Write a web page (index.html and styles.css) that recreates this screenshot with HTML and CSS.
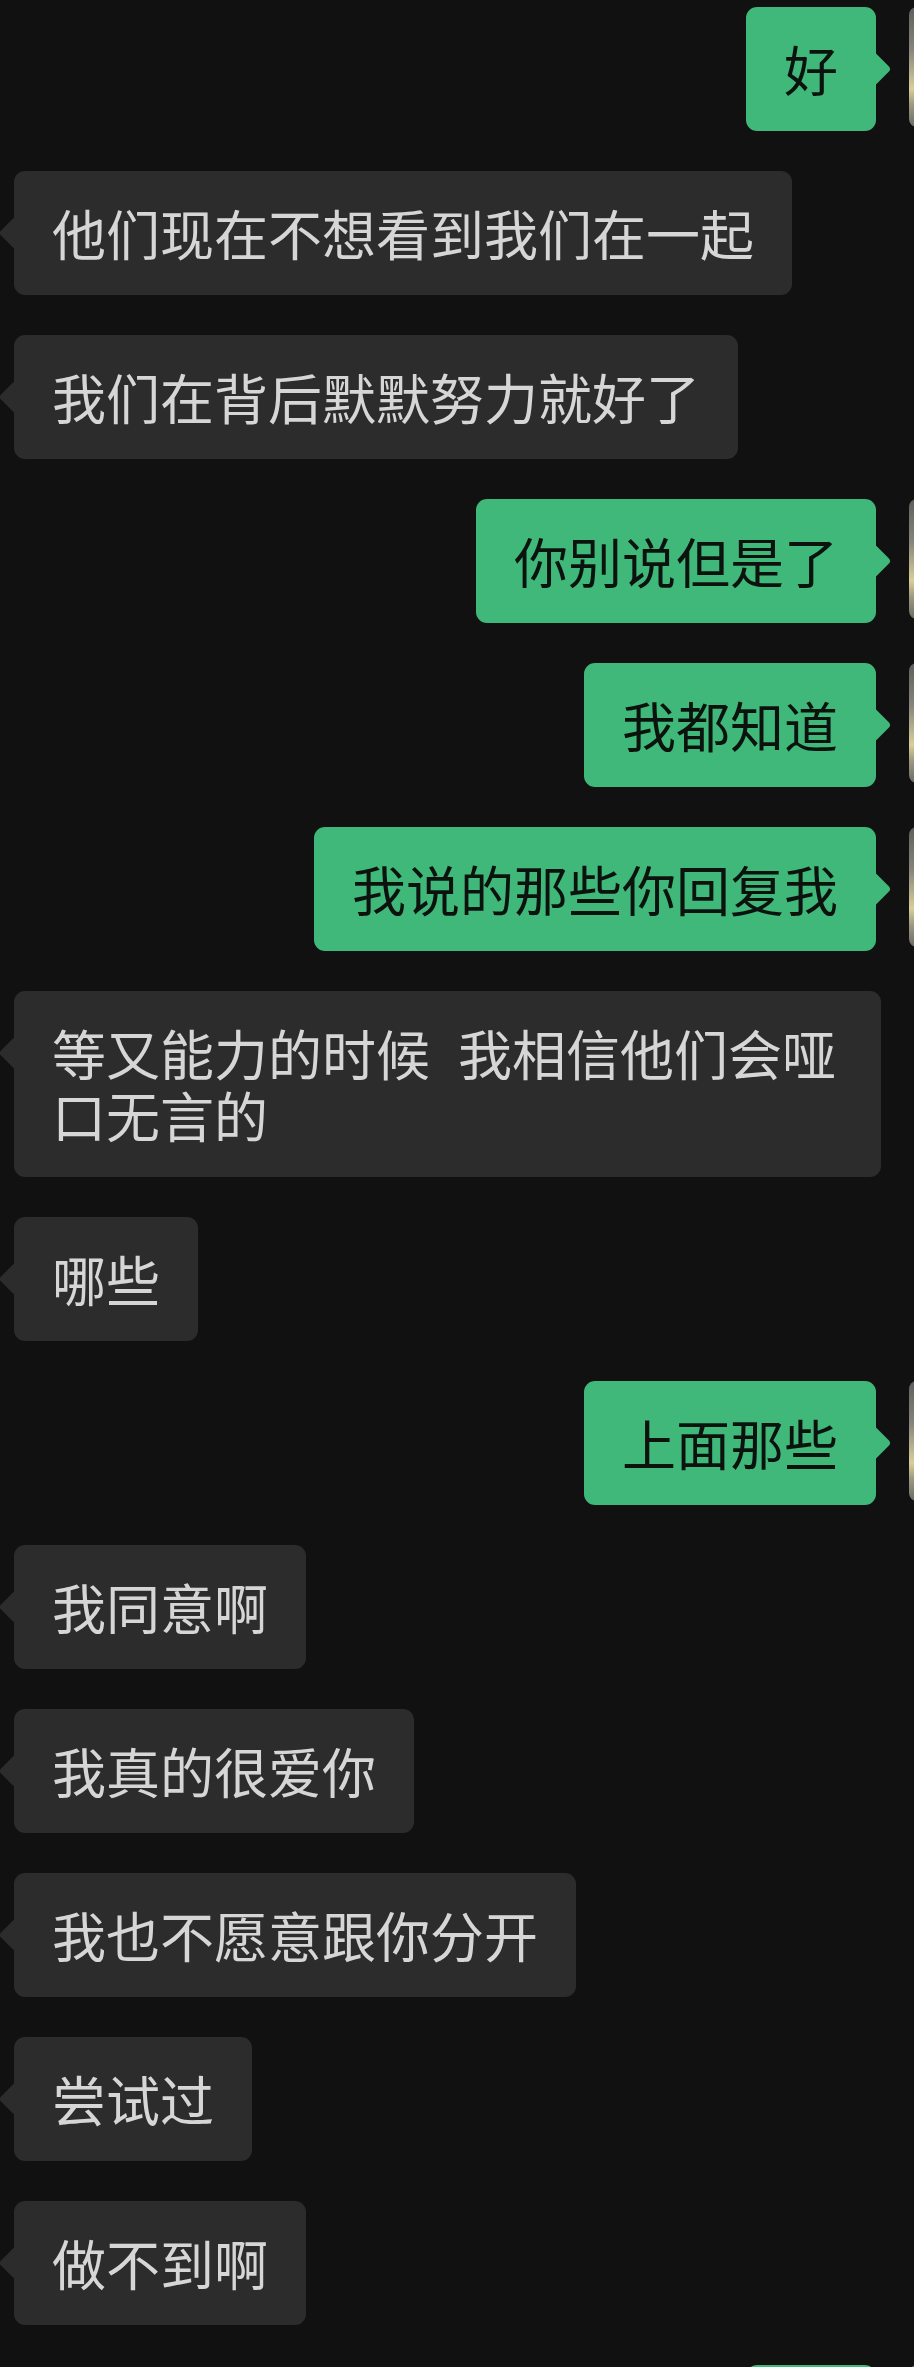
FILE: index.html
```html
<!DOCTYPE html>
<html lang="zh-CN">
<head>
    <meta charset="UTF-8">
    <meta name="viewport" content="width=device-width, initial-scale=1.0">
    <title>聊天记录</title>
    <link rel="stylesheet" href="styles.css">
</head>
<body>
    <div class="chat">
        <div class="msg sent">
            <div class="bubble">好</div>
            <div class="avatar"></div>
        </div>
        <div class="msg received">
            <div class="bubble">他们现在不想看到我们在一起</div>
        </div>
        <div class="msg received">
            <div class="bubble">我们在背后默默努力就好了</div>
        </div>
        <div class="msg sent">
            <div class="bubble">你别说但是了</div>
            <div class="avatar"></div>
        </div>
        <div class="msg sent">
            <div class="bubble">我都知道</div>
            <div class="avatar"></div>
        </div>
        <div class="msg sent">
            <div class="bubble">我说的那些你回复我</div>
            <div class="avatar"></div>
        </div>
        <div class="msg received">
            <div class="bubble">等又能力的时候 我相信他们会哑口无言的</div>
        </div>
        <div class="msg received">
            <div class="bubble">哪些</div>
        </div>
        <div class="msg sent">
            <div class="bubble">上面那些</div>
            <div class="avatar"></div>
        </div>
        <div class="msg received">
            <div class="bubble">我同意啊</div>
        </div>
        <div class="msg received">
            <div class="bubble">我真的很爱你</div>
        </div>
        <div class="msg received">
            <div class="bubble">我也不愿意跟你分开</div>
        </div>
        <div class="msg received">
            <div class="bubble">尝试过</div>
        </div>
        <div class="msg received">
            <div class="bubble">做不到啊</div>
        </div>
        <div class="msg sent">
            <div class="bubble"><span class="blank"></span></div>
            <div class="avatar"></div>
        </div>
    </div>
</body>
</html>
```
FILE: styles.css
```css
:root {
    --page-bg: #111111;
    --received-bg: #2c2c2c;
    --received-text: #d6d6d6;
    --sent-bg: #40b87a;
    --sent-text: #0c130e;
}

*, *::before, *::after {
    box-sizing: border-box;
}

html, body {
    margin: 0;
    background-color: var(--page-bg);
    overflow: hidden;
}

body {
    font-family: "Noto Sans CJK SC", "Noto Sans", sans-serif;
    width: 914px;
    height: 2367px;
}

.chat {
    display: flex;
    flex-direction: column;
    gap: 40px;
    padding: 7px 0 0 14px;
    width: 914px;
}

.msg {
    display: flex;
    align-items: flex-start;
}

.msg.sent {
    justify-content: flex-end;
    gap: 33px;
}

.bubble {
    position: relative;
    max-width: 867px;
    padding: 31px 38px;
    border-radius: 11px;
    font-size: 54px;
    line-height: 62px;
    word-spacing: 16px;
}

/* ----- 气泡小尖角 ----- */
.bubble::after {
    content: "";
    position: absolute;
    top: 51px;
    width: 22px;
    height: 22px;
    background: inherit;
    transform: rotate(45deg);
}

.received .bubble {
    background-color: var(--received-bg);
    color: var(--received-text);
}

.received .bubble::after {
    left: -11px;
    border-bottom-left-radius: 4px;
}

.sent .bubble {
    background-color: var(--sent-bg);
    color: var(--sent-text);
}

.sent .bubble::after {
    right: -11px;
    border-top-right-radius: 4px;
}

.blank {
    display: inline-block;
    width: 54px;
    height: 62px;
    vertical-align: top;
}

.avatar {
    flex: none;
    width: 120px;
    height: 120px;
    margin-right: -115px;
    border-radius: 8px;
    background: linear-gradient(180deg, #5f5f5b 0%, #85837a 35%, #d8ce9c 68%, #9b977f 82%, #6c6b66 100%);
}
```
